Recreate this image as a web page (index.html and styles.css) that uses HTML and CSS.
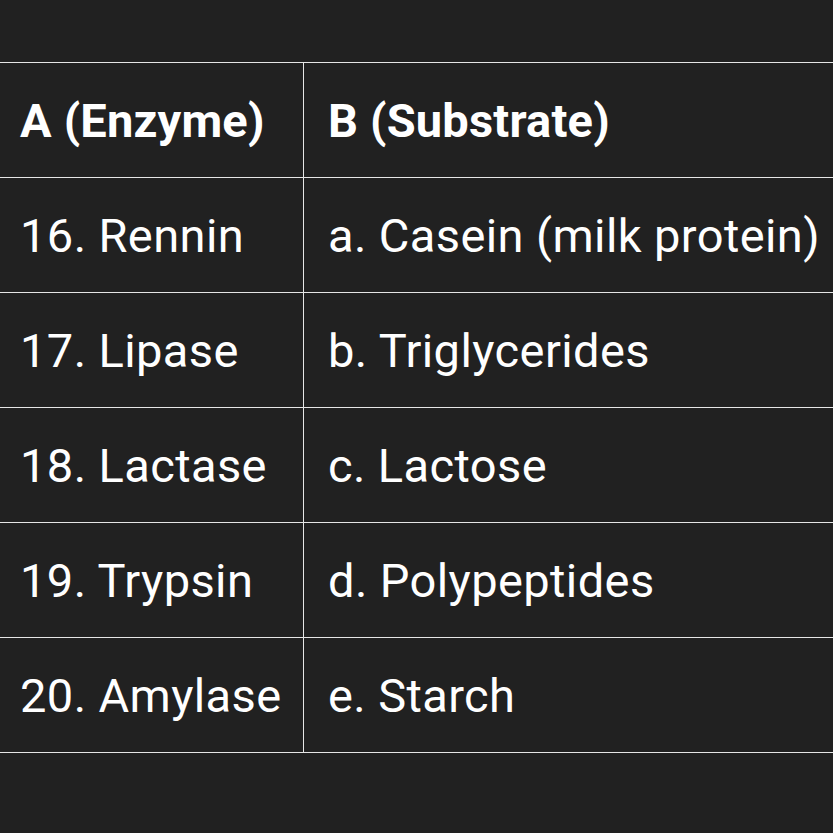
FILE: index.html
```html
<!DOCTYPE html>
<html>
<head>
<meta charset="utf-8">
<link rel="stylesheet" href="styles.css">
</head>
<body>
<div class="page">
  <div class="table">
    <div class="cell head c1">A (Enzyme)</div>
    <div class="cell head c2">B (Substrate)</div>
    <div class="cell c1">16. Rennin</div>
    <div class="cell c2">a. Casein (milk protein)</div>
    <div class="cell c1">17. Lipase</div>
    <div class="cell c2">b. Triglycerides</div>
    <div class="cell c1">18. Lactase</div>
    <div class="cell c2">c. Lactose</div>
    <div class="cell c1">19. Trypsin</div>
    <div class="cell c2">d. Polypeptides</div>
    <div class="cell c1">20. Amylase</div>
    <div class="cell c2">e. Starch</div>
  </div>
</div>
</body>
</html>
```
FILE: styles.css
```css
html, body {
  margin: 0;
  padding: 0;
  background: #212121;
  overflow: hidden;
}
.page {
  width: 833px;
  height: 833px;
  padding-top: 62px;
  box-sizing: border-box;
  overflow: hidden;
}
.table {
  display: grid;
  grid-template-columns: 304px 580px;
  width: 884px;
  border-top: 1px solid #e6e6e6;
  font-family: Roboto, "Liberation Sans", sans-serif;
  font-size: 47px;
  color: #ffffff;
}
.cell {
  box-sizing: border-box;
  height: 115px;
  border-bottom: 1px solid #e6e6e6;
  display: flex;
  align-items: center;
  white-space: nowrap;
  letter-spacing: 0.4px;
}
.c1 {
  border-right: 1px solid #e6e6e6;
  padding-left: 20px;
}
.c2 {
  padding-left: 24px;
}
.head {
  font-weight: 700;
  letter-spacing: 0.2px;
}
```
